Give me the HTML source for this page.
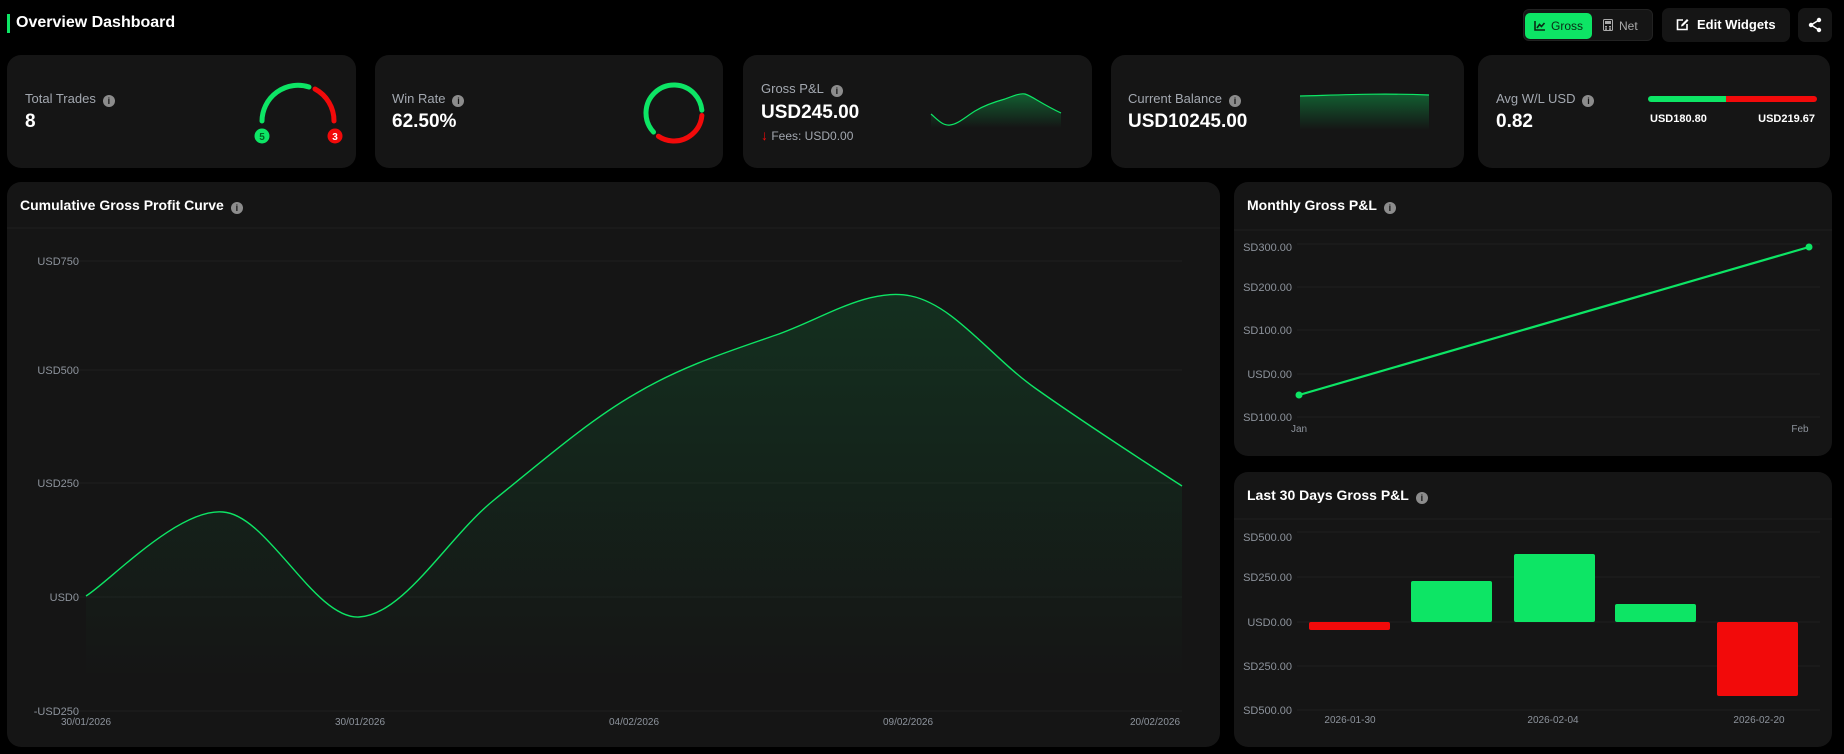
<!DOCTYPE html>
<html><head><meta charset="utf-8"><style>
*{margin:0;padding:0;box-sizing:border-box}
body{width:1844px;height:754px;background:#000;font-family:"Liberation Sans",sans-serif;color:#fff;position:relative;overflow:hidden}
.a{position:absolute;white-space:nowrap}
.card{position:absolute;background:#151515;border-radius:14px}
.lbl{color:#a3a8b0;font-size:13px}
.val{font-size:19px;font-weight:bold}
.ttl{font-size:14px;font-weight:bold}
.i{display:inline-block;width:12px;height:12px;border-radius:50%;background:#8c8c8c;color:#151515;font-size:9px;font-weight:bold;text-align:center;line-height:12px;vertical-align:-1px;margin-left:7px}
.ax{color:#8d939c;font-size:11px}
</style></head><body>
<div class="a" style="left:7px;top:14px;width:3px;height:19px;background:#0de565"></div>
<div class="a" style="left:16px;top:14px;font-size:16px;font-weight:bold">Overview Dashboard</div>
<div class="a" style="left:1523px;top:9px;width:130px;height:32px;background:#151515;border:1px solid #222;border-radius:6px"></div>
<div class="a" style="left:1525px;top:13px;width:67px;height:26px;background:#0de565;border-radius:5px;color:#0a2a15;font-size:12px;line-height:26px;padding-left:9px">
<svg width="12" height="11" style="vertical-align:-1px;margin-right:5px"><path d="M1 1V10H11" stroke="#0a2a15" stroke-width="1.6" fill="none"/><path d="M3 8L5.5 4.5L7.5 6.5L10.5 3" stroke="#0a2a15" stroke-width="1.6" fill="none"/></svg>Gross</div>
<div class="a" style="left:1603px;top:13px;height:26px;line-height:26px;color:#aaa;font-size:12px">
<svg width="10" height="12" style="vertical-align:-1px;margin-right:6px"><rect x="0.5" y="0.5" width="9" height="11" rx="1" fill="none" stroke="#aaa"/><rect x="2" y="2" width="6" height="3" fill="#aaa"/><rect x="2" y="7" width="2" height="1.5" fill="#aaa"/><rect x="6" y="7" width="2" height="1.5" fill="#aaa"/><rect x="2" y="9.3" width="2" height="1.5" fill="#aaa"/><rect x="6" y="9.3" width="2" height="1.5" fill="#aaa"/></svg>Net</div>
<div class="a" style="left:1662px;top:8px;width:128px;height:34px;background:#151515;border-radius:7px;font-size:13px;font-weight:bold;line-height:34px;padding-left:14px">
<svg width="13" height="13" style="vertical-align:-2px;margin-right:8px"><path d="M7 2H1.5V11.5H11V6" stroke="#fff" stroke-width="1.6" fill="none"/><path d="M5 8.5L5.5 6.5L11 1L12.5 2.5L7 8Z" fill="#fff"/></svg>Edit Widgets</div>
<div class="a" style="left:1798px;top:8px;width:34px;height:34px;background:#151515;border-radius:7px">
<svg width="34" height="34"><circle cx="21" cy="12" r="2.2" fill="#fff"/><circle cx="13" cy="17" r="2.2" fill="#fff"/><circle cx="21" cy="22" r="2.2" fill="#fff"/><path d="M21 12L13 17L21 22" stroke="#fff" stroke-width="1.5" fill="none"/></svg></div>

<div class="card" style="left:7px;top:55px;width:349px;height:113px"></div>
<div class="card" style="left:375px;top:55px;width:348px;height:113px"></div>
<div class="card" style="left:743px;top:55px;width:349px;height:113px"></div>
<div class="card" style="left:1111px;top:55px;width:353px;height:113px"></div>
<div class="card" style="left:1478px;top:55px;width:352px;height:113px"></div>
<div class="card" style="left:7px;top:182px;width:1213px;height:565px"></div>
<div class="card" style="left:1234px;top:182px;width:598px;height:274px"></div>
<div class="card" style="left:1234px;top:472px;width:598px;height:275px"></div>

<div class="a lbl" style="left:25px;top:91px">Total Trades<span class="i">i</span></div>
<div class="a val" style="left:25px;top:111px">8</div>
<div class="a lbl" style="left:392px;top:91px">Win Rate<span class="i">i</span></div>
<div class="a val" style="left:392px;top:111px">62.50%</div>
<div class="a lbl" style="left:761px;top:81px">Gross P&amp;L<span class="i">i</span></div>
<div class="a val" style="left:761px;top:102px">USD245.00</div>
<div class="a lbl" style="left:761px;top:127px;font-size:12px"><span style="color:#f20a0a;font-size:14px;font-weight:bold">&#8595;</span> Fees: USD0.00</div>
<div class="a lbl" style="left:1128px;top:91px">Current Balance<span class="i">i</span></div>
<div class="a val" style="left:1128px;top:111px">USD10245.00</div>
<div class="a lbl" style="left:1496px;top:91px">Avg W/L USD<span class="i">i</span></div>
<div class="a val" style="left:1496px;top:111px">0.82</div>
<div class="a" style="left:1650px;top:113px;font-size:11px;font-weight:bold">USD180.80</div>
<div class="a" style="left:1815px;top:113px;font-size:11px;font-weight:bold;transform:translateX(-100%)">USD219.67</div>

<div class="a ttl" style="left:20px;top:197px">Cumulative Gross Profit Curve<span class="i">i</span></div>
<div class="a ttl" style="left:1247px;top:197px">Monthly Gross P&amp;L<span class="i">i</span></div>
<div class="a ttl" style="left:1247px;top:487px">Last 30 Days Gross P&amp;L<span class="i">i</span></div>

<svg class="a" style="left:0;top:0" width="1844" height="754">
<defs>
<linearGradient id="g1" gradientUnits="userSpaceOnUse" x1="0" y1="290" x2="0" y2="680"><stop offset="0" stop-color="#0de565" stop-opacity="0.13"/><stop offset="1" stop-color="#0de565" stop-opacity="0"/></linearGradient>
<linearGradient id="g2" x1="0" y1="0" x2="0" y2="1"><stop offset="0" stop-color="#0de565" stop-opacity="0.35"/><stop offset="1" stop-color="#0de565" stop-opacity="0"/></linearGradient>
</defs>
<path d="M262 121A36 36 0 0 1 309 87" stroke="#0de565" stroke-width="5" fill="none" stroke-linecap="round"/>
<path d="M315 89A36 36 0 0 1 334 121" stroke="#f20a0a" stroke-width="5" fill="none" stroke-linecap="round"/>
<circle cx="262" cy="136" r="7.5" fill="#0de565"/><text x="262" y="140" font-size="10" font-weight="bold" text-anchor="middle" fill="#062">5</text>
<circle cx="335" cy="136" r="7.5" fill="#f20a0a"/><text x="335" y="140" font-size="10" font-weight="bold" text-anchor="middle" fill="#fff">3</text>
<circle cx="674" cy="113" r="28" fill="none" stroke="#0de565" stroke-width="5" stroke-dasharray="106 200" transform="rotate(137 674 113)" stroke-linecap="round"/>
<circle cx="674" cy="113" r="28" fill="none" stroke="#f20a0a" stroke-width="5" stroke-dasharray="58 200" transform="rotate(5 674 113)" stroke-linecap="round"/>
<path d="M931 114C938 120 943 126 950 125C958 124 964 118 975 111C985 105 994 102 1005 99C1013 96 1020 93 1025 94C1032 96 1040 103 1061 113L1061 128L931 128Z" fill="url(#g2)"/>
<path d="M931 114C938 120 943 126 950 125C958 124 964 118 975 111C985 105 994 102 1005 99C1013 96 1020 93 1025 94C1032 96 1040 103 1061 113" stroke="#0de565" stroke-width="1.2" fill="none"/>
<path d="M1300 96C1340 95 1380 93 1429 95L1429 130L1300 130Z" fill="url(#g2)"/>
<path d="M1300 96C1340 95 1380 93 1429 95" stroke="#0de565" stroke-width="1.2" fill="none"/>
<line x1="1651" y1="99" x2="1724" y2="99" stroke="#0de565" stroke-width="6" stroke-linecap="round"/>
<line x1="1724" y1="99" x2="1814" y2="99" stroke="#f20a0a" stroke-width="6" stroke-linecap="round"/>
<line x1="1718" y1="99" x2="1726" y2="99" stroke="#0de565" stroke-width="6"/>
<line x1="7" y1="228" x2="1220" y2="228" stroke="#1f1f1f"/>
<g stroke="#1e1e1e"><line x1="72" y1="261" x2="1182" y2="261"/><line x1="72" y1="370" x2="1182" y2="370"/><line x1="72" y1="483" x2="1182" y2="483"/><line x1="72" y1="597" x2="1182" y2="597"/><line x1="72" y1="711" x2="1182" y2="711"/></g>
<path d="M86 596C109 582 178 508 223 512C268 515 314 619 359 617C404 615 448 537 494 500C540 463 588 421 635 394C682 366 730 351 776 335C822 319 868 287 911 296C954 305 990 356 1035 388C1080 420 1157 470 1182 486L1182 690L86 690Z" fill="url(#g1)"/>
<path d="M86 596C109 582 178 508 223 512C268 515 314 619 359 617C404 615 448 537 494 500C540 463 588 421 635 394C682 366 730 351 776 335C822 319 868 287 911 296C954 305 990 356 1035 388C1080 420 1157 470 1182 486" stroke="#0de565" stroke-width="1.4" fill="none"/>
<g fill="#8d939c" font-size="11" text-anchor="end"><text x="79" y="265">USD750</text><text x="79" y="374">USD500</text><text x="79" y="487">USD250</text><text x="79" y="601">USD0</text><text x="79" y="715">-USD250</text></g>
<g fill="#8d939c" font-size="10" text-anchor="middle"><text x="86" y="725">30/01/2026</text><text x="360" y="725">30/01/2026</text><text x="634" y="725">04/02/2026</text><text x="908" y="725">09/02/2026</text><text x="1155" y="725">20/02/2026</text></g>
<line x1="1234" y1="230" x2="1832" y2="230" stroke="#1f1f1f"/>
<g stroke="#1e1e1e"><line x1="1297" y1="244" x2="1820" y2="244"/><line x1="1297" y1="287" x2="1820" y2="287"/><line x1="1297" y1="330" x2="1820" y2="330"/><line x1="1297" y1="374" x2="1820" y2="374"/><line x1="1297" y1="417" x2="1820" y2="417"/></g>
<g fill="#8d939c" font-size="11" text-anchor="end"><text x="1292" y="251">SD300.00</text><text x="1292" y="291">SD200.00</text><text x="1292" y="334">SD100.00</text><text x="1292" y="378">USD0.00</text><text x="1292" y="421">SD100.00</text></g>
<line x1="1299" y1="395" x2="1809" y2="247" stroke="#0de565" stroke-width="2.2"/>
<circle cx="1299" cy="395" r="3.5" fill="#0de565"/><circle cx="1809" cy="247" r="3.5" fill="#0de565"/>
<g fill="#8d939c" font-size="10" text-anchor="middle"><text x="1299" y="432">Jan</text><text x="1800" y="432">Feb</text></g>
<line x1="1234" y1="519" x2="1832" y2="519" stroke="#1f1f1f"/>
<g stroke="#1e1e1e"><line x1="1297" y1="532" x2="1820" y2="532"/><line x1="1297" y1="577" x2="1820" y2="577"/><line x1="1297" y1="622" x2="1820" y2="622"/><line x1="1297" y1="666" x2="1820" y2="666"/><line x1="1297" y1="710" x2="1820" y2="710"/></g>
<g fill="#8d939c" font-size="11" text-anchor="end"><text x="1292" y="541">SD500.00</text><text x="1292" y="581">SD250.00</text><text x="1292" y="626">USD0.00</text><text x="1292" y="670">SD250.00</text><text x="1292" y="714">SD500.00</text></g>
<rect x="1309" y="622" width="81" height="8" rx="2" fill="#f20a0a"/>
<rect x="1411" y="581" width="81" height="41" rx="2" fill="#0de565"/>
<rect x="1514" y="554" width="81" height="68" rx="2" fill="#0de565"/>
<rect x="1615" y="604" width="81" height="18" rx="2" fill="#0de565"/>
<rect x="1717" y="622" width="81" height="74" rx="2" fill="#f20a0a"/>
<g fill="#8d939c" font-size="10" text-anchor="middle"><text x="1350" y="723">2026-01-30</text><text x="1553" y="723">2026-02-04</text><text x="1759" y="723">2026-02-20</text></g>
</svg>
</body></html>
